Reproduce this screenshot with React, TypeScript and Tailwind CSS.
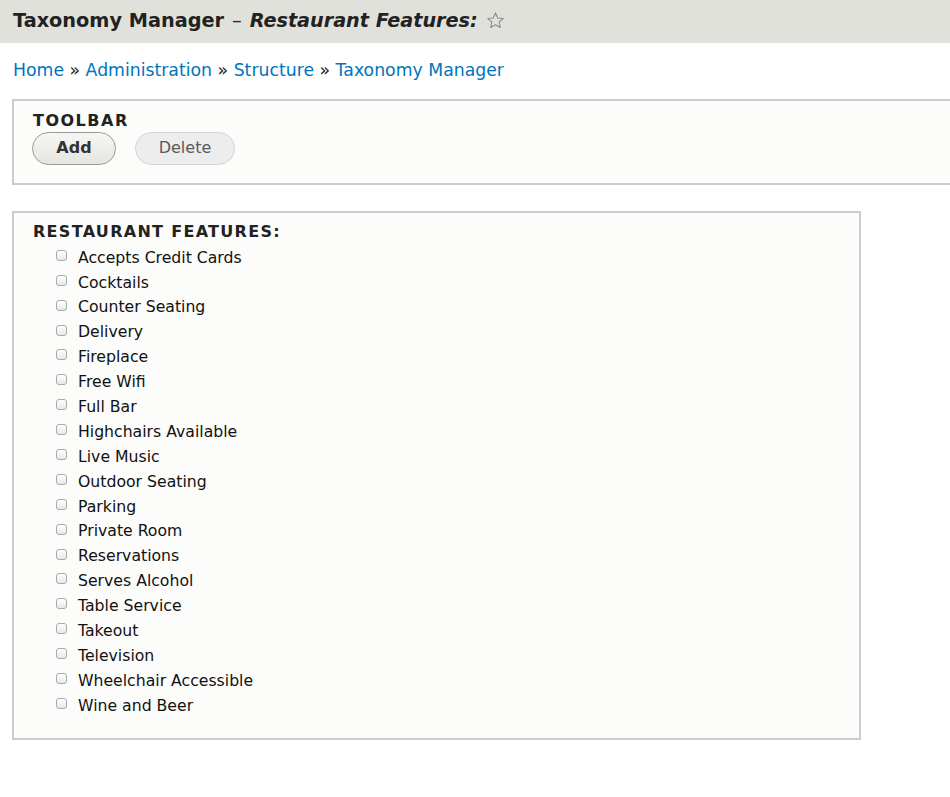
import React from "react";

const items = [
  "Accepts Credit Cards",
  "Cocktails",
  "Counter Seating",
  "Delivery",
  "Fireplace",
  "Free Wifi",
  "Full Bar",
  "Highchairs Available",
  "Live Music",
  "Outdoor Seating",
  "Parking",
  "Private Room",
  "Reservations",
  "Serves Alcohol",
  "Table Service",
  "Takeout",
  "Television",
  "Wheelchair Accessible",
  "Wine and Beer",
];

export default function App() {
  return (
    <div
      className="min-h-[797px] w-[950px] overflow-hidden bg-white text-[#222]"
      style={{ fontFamily: '"DejaVu Sans", Verdana, sans-serif' }}
    >
      <div className="flex h-[43px] items-center bg-[#e1e1dc] pl-[13px]">
        <span className="text-[19.3px] font-bold text-[#222]">Taxonomy Manager</span>
        <span className="ml-[8px] text-[19.3px] text-[#222]">–</span>
        <span className="ml-[8px] text-[19.2px] font-bold italic text-[#222]">Restaurant Features:</span>
        <svg className="ml-[8px] mt-[-2px]" width="19" height="19" viewBox="0 0 24 24">
          <path
            d="M12 2.5l2.9 6.3 6.8.7-5.1 4.6 1.5 6.8L12 17.4l-6.1 3.5 1.5-6.8-5.1-4.6 6.8-.7z"
            fill="none"
            stroke="#888"
            strokeWidth="1.3"
            strokeLinejoin="round"
          />
        </svg>
      </div>

      <div className="mt-[15px] pl-[13px] text-[17.3px] text-[#0074bd]">
        <span>Home</span>
        <span className="text-[#222]"> » </span>
        <span>Administration</span>
        <span className="text-[#222]"> » </span>
        <span>Structure</span>
        <span className="text-[#222]"> » </span>
        <span>Taxonomy Manager</span>
      </div>

      <div className="ml-[12px] mt-[15px] h-[86px] w-[960px] border-2 border-[#ccc] bg-[#fcfcfa] pl-[19px] pt-[11px]">
        <div className="text-[16px] font-bold leading-[18px] tracking-[1.5px] text-[#222]">TOOLBAR</div>
        <div className="ml-[-1px] mt-[2px] flex gap-[19px]">
          <button className="flex h-[33px] w-[84px] items-center justify-center rounded-full border border-[#999] bg-gradient-to-b from-[#f6f6f3] to-[#e6e5e1] text-[16px] font-bold text-[#333]">
            Add
          </button>
          <button className="flex h-[33px] w-[100px] items-center justify-center rounded-full border border-[#d4d4d4] bg-[#ededed] text-[16px] text-[#5a5a5a]">
            Delete
          </button>
        </div>
      </div>

      <div className="ml-[12px] mt-[26px] w-[849px] border-2 border-[#ccc] bg-[#fcfcfa] pb-[20px] pl-[19px] pt-[9px]">
        <div className="text-[16px] font-bold leading-[20px] tracking-[1.3px] text-[#222]">RESTAURANT FEATURES:</div>
        <div className="mt-[3px] pl-[23px]">
          {items.map((t) => (
            <div key={t} className="flex h-[24.9px] items-center">
              <span className="mt-[-4px] h-[11px] w-[11px] rounded-[3px] border border-[#aaa] bg-gradient-to-b from-white to-[#e8e8e8]" />
              <span className="ml-[11px] text-[15.7px] text-[#111]">{t}</span>
            </div>
          ))}
        </div>
      </div>
    </div>
  );
}
